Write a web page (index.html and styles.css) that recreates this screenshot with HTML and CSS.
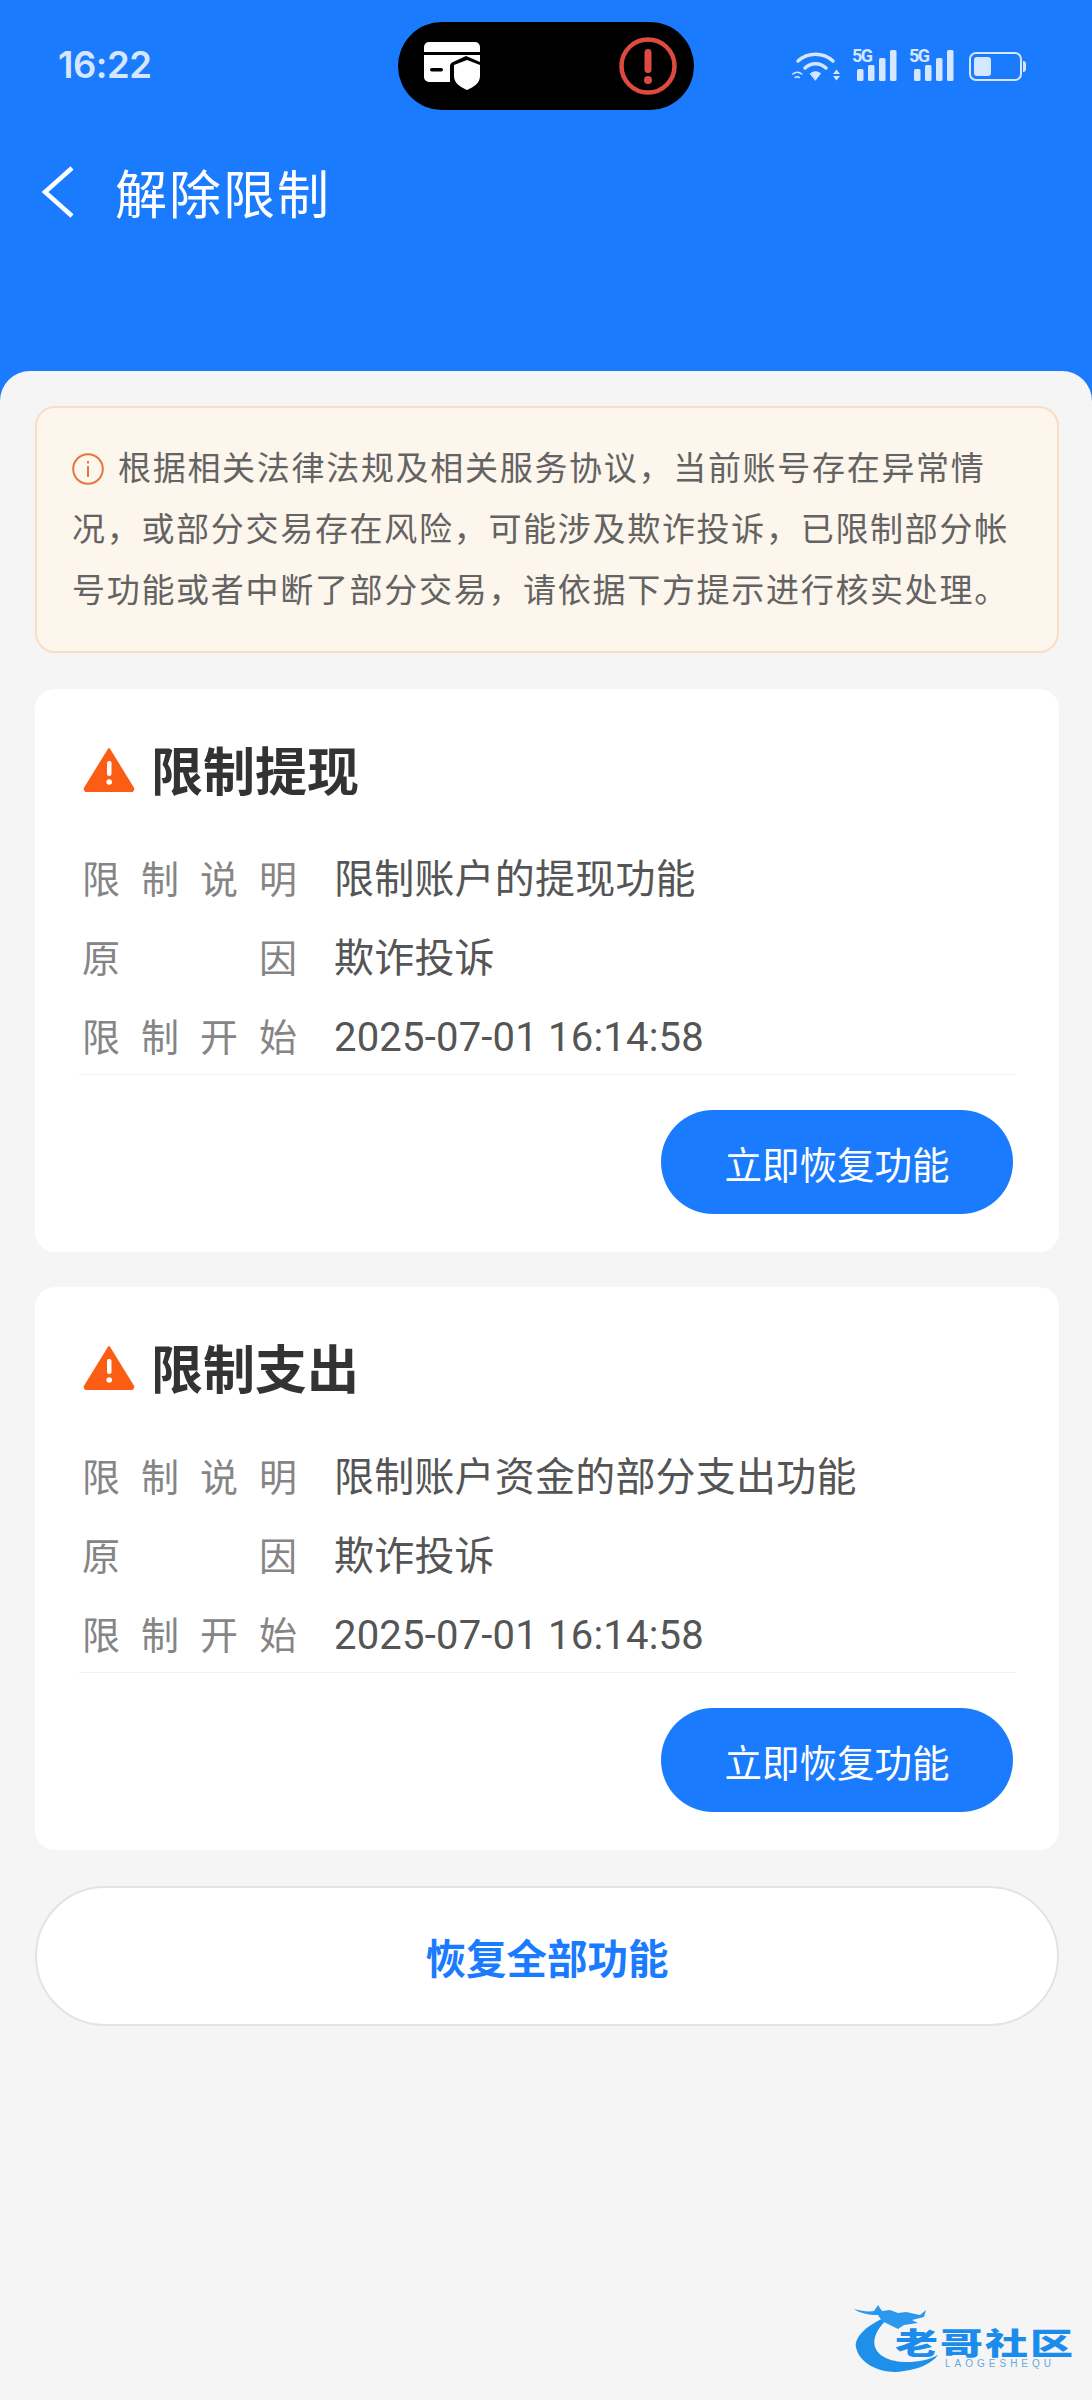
FILE: index.html
```html
<!DOCTYPE html>
<html lang="zh">
<head>
<meta charset="utf-8">
<title>解除限制</title>
<link rel="stylesheet" href="styles.css">
</head>
<body>
<header class="top">
  <div class="status">
    <span class="time">16:22</span>
    <div class="island">
      <svg class="card-icon" width="56" height="48" viewBox="0 0 56 48">
        <path fill="#fff" d="M5 0h46a5 5 0 0 1 5 5v5H0V5a5 5 0 0 1 5-5z"/>
        <path fill="#fff" d="M0 13h56v7L42 14 29 20c-2 1-3 2-3 4v16H5a5 5 0 0 1-5-5z"/>
        <rect x="6" y="26" width="13" height="3.500" rx="1.700" fill="#000"/>
        <path fill="#fff" d="M43 18l13 5v11c0 7-6 11-13 14-7-3-13-7-13-14V23z"/>
      </svg>
      <svg class="alert-icon" width="58" height="62" viewBox="0 0 58 62">
        <circle cx="29" cy="31" r="26.500" fill="none" stroke="#de4a40" stroke-width="4.500"/>
        <rect x="25.500" y="14" width="7" height="24" rx="3.500" fill="#de4a40"/>
        <circle cx="29" cy="45" r="4" fill="#de4a40"/>
      </svg>
    </div>
    <div class="sys">
      <svg class="wifi" width="48" height="31" viewBox="0 0 48 31" fill="none" stroke="#d5e6ff" stroke-linecap="round">
        <path d="M6 11a26 26 0 0 1 35 0" stroke-width="3.500"/>
        <path d="M13 18a15 15 0 0 1 21 0" stroke-width="3.500"/>
        <path d="M18.500 23.500a8 8 0 0 1 10 0L23.500 30z" fill="#d5e6ff" stroke-width="1"/>
        <path d="M0.800 24a7 7 0 0 1 9 0M3.200 27.500a3.500 3.500 0 0 1 4 0" stroke-width="1.600"/>
        <path d="M41 24l3.500-4.500 3.500 4.500zM41 26l3.500 4.500 3.500-4.500z" fill="#d5e6ff" stroke="none"/>
      </svg>
      <div class="sig"><span class="sig-5g">5G</span><svg width="40" height="31" viewBox="0 0 40 31" fill="#d5e6ff"><rect x="0" y="19" width="6.500" height="12" rx="1.500"/><rect x="11" y="15" width="6.500" height="16" rx="1.500"/><rect x="22" y="8" width="6.500" height="23" rx="1.500"/><rect x="33" y="0" width="6.500" height="31" rx="1.500"/></svg></div>
      <div class="sig"><span class="sig-5g">5G</span><svg width="40" height="31" viewBox="0 0 40 31" fill="#d5e6ff"><rect x="0" y="19" width="6.500" height="12" rx="1.500"/><rect x="11" y="15" width="6.500" height="16" rx="1.500"/><rect x="22" y="8" width="6.500" height="23" rx="1.500"/><rect x="33" y="0" width="6.500" height="31" rx="1.500"/></svg></div>
      <svg class="battery" width="57" height="29" viewBox="0 0 57 29"><rect x="1" y="1" width="51" height="27" rx="6" fill="none" stroke="#d5e6ff" stroke-width="2"/><rect x="5" y="5" width="17" height="19" rx="3" fill="#d5e6ff"/><path d="M54 9c2 0 3 1 3 3v5c0 2-1 3-3 3z" fill="#d5e6ff"/></svg>
    </div>
  </div>
  <div class="nav">
    <svg class="back" width="34" height="52" viewBox="0 0 34 52" fill="none"><path d="M31 2 4 26l27 24" stroke="#fff" stroke-width="4.500"/></svg>
    <h1 class="title">解除限制</h1>
  </div>
</header>
<main class="sheet">
  <section class="notice">
    <p class="notice-text"><svg class="info" width="32" height="32" viewBox="0 0 32 32" fill="none"><circle cx="16" cy="16" r="14.800" stroke="#e5763d" stroke-width="2"/><rect x="15" y="13" width="2" height="11" fill="#e5763d"/><rect x="15" y="8" width="2" height="2.500" fill="#e5763d"/></svg>根据相关法律法规及相关服务协议，当前账号存在异常情况，或部分交易存在风险，可能涉及欺诈投诉，已限制部分帐号功能或者中断了部分交易，请依据下方提示进行核实处理。</p>
  </section>
  <section class="card">
    <div class="card-head">
      <svg class="warn" width="52" height="46" viewBox="0 0 52 46"><path d="M26 3 50 42a2 2 0 0 1-2 3H4a2 2 0 0 1-2-3z" fill="#fb5d15" stroke="#fb5d15" stroke-width="2" stroke-linejoin="round"/><rect x="24" y="15" width="4.500" height="15" rx="2" fill="#fff"/><circle cx="26.200" cy="36" r="2.800" fill="#fff"/></svg>
      <h2 class="card-title">限制提现</h2>
    </div>
    <dl class="rows">
      <div class="row"><dt class="label">限制说明</dt><dd class="value">限制账户的提现功能</dd></div>
      <div class="row"><dt class="label">原因</dt><dd class="value">欺诈投诉</dd></div>
      <div class="row"><dt class="label">限制开始</dt><dd class="value">2025-07-01 16:14:58</dd></div>
    </dl>
    <div class="actions"><button class="btn">立即恢复功能</button></div>
  </section>
  <section class="card">
    <div class="card-head">
      <svg class="warn" width="52" height="46" viewBox="0 0 52 46"><path d="M26 3 50 42a2 2 0 0 1-2 3H4a2 2 0 0 1-2-3z" fill="#fb5d15" stroke="#fb5d15" stroke-width="2" stroke-linejoin="round"/><rect x="24" y="15" width="4.500" height="15" rx="2" fill="#fff"/><circle cx="26.200" cy="36" r="2.800" fill="#fff"/></svg>
      <h2 class="card-title">限制支出</h2>
    </div>
    <dl class="rows">
      <div class="row"><dt class="label">限制说明</dt><dd class="value">限制账户资金的部分支出功能</dd></div>
      <div class="row"><dt class="label">原因</dt><dd class="value">欺诈投诉</dd></div>
      <div class="row"><dt class="label">限制开始</dt><dd class="value">2025-07-01 16:14:58</dd></div>
    </dl>
    <div class="actions"><button class="btn">立即恢复功能</button></div>
  </section>
  <button class="restore-all">恢复全部功能</button>
  <div class="watermark">
    <svg class="wm-dragon" width="90" height="72" viewBox="0 0 90 72">
      <path d="M38 12C14 20 0 34 2 44c3 18 28 28 48 24 16-2 28-8 34-16-14 8-40 10-54 2C16 46 16 30 38 12z" fill="#1e90ea"/>
      <path d="M0 6c8 2 14 3 20 2l4-6 4 6 8-1 8 3 8-1 14 3 6-5-2 7-12 3 6 3-14 2-6 4-8-4-8-4-4-6C14 12 6 10 0 6z" fill="#2b98ee"/>
    </svg>
    <div class="wm-text">
      <span class="wm-cn">老哥社区</span>
      <span class="wm-en">LAOGESHEQU</span>
    </div>
  </div>
</main>
</body>
</html>
```

FILE: styles.css
```css
* { box-sizing: border-box; }
html, body { margin: 0; padding: 0; height: 2400px; overflow: hidden; }
body {
  background: #1b7bfe;
  font-family: "Noto Sans CJK SC", "Roboto", sans-serif;
  display: flex;
  flex-direction: column;
}
.top { height: 371px; flex: none; color: #fff; }
.status {
  height: 160px;
  padding: 22px 0 0 58px;
  display: flex;
  align-items: flex-start;
}
.time {
  width: 340px;
  font-family: "Inter", sans-serif;
  font-weight: 600;
  font-size: 36.500px;
  line-height: 86px;
  color: #d5e6ff;
  letter-spacing: -0.5px;
}
.island {
  width: 296px;
  height: 88px;
  background: #000;
  border-radius: 44px;
  padding: 0 17px 0 26px;
  display: flex;
  align-items: center;
  justify-content: space-between;
}
.sys {
  margin-left: 98px;
  padding-top: 28px;
  display: flex;
  align-items: flex-end;
  gap: 17px;
}
.sig { position: relative; width: 40px; height: 31px; }
.sig > svg { display: block; }
.battery { margin-left: -2px; }
.sig-5g {
  position: absolute;
  left: -5px;
  top: -2px;
  font-family: "Roboto", sans-serif;
  font-weight: 700;
  font-size: 18px;
  line-height: 16px;
  color: #d5e6ff;
  letter-spacing: -1.500px;
}
.nav {
  display: flex;
  align-items: center;
  padding-left: 41px;
  gap: 40px;
  height: 64px;
}
.title { margin: 0; font-size: 52px; font-weight: 400; line-height: 64px; letter-spacing: 2px; }
.sheet {
  flex: 1;
  background: #f5f5f5;
  border-radius: 30px 30px 0 0;
  padding: 35px 33px 0 35px;
  position: relative;
}
.notice {
  height: 247px;
  background: #fdf6ec;
  border: 2.500px solid #fbdcc5;
  border-radius: 20px;
  padding: 28px 30px 0 35px;
  margin-bottom: 36px;
}
.notice-text {
  margin: 0;
  font-size: 33px;
  line-height: 61px;
  letter-spacing: 1.7px;
  color: #636363;
}
.info { vertical-align: -5px; margin-right: 14px; }
.card {
  height: 563px;
  background: #fff;
  border-radius: 20px;
  padding: 47px 46px 0 48px;
  margin-bottom: 35px;
}
.card-head { display: flex; align-items: center; gap: 16px; height: 66px; margin-bottom: 34px; }
.card-title { margin: 0; font-size: 52px; font-weight: 700; line-height: 66px; color: #333; }
.rows {
  margin: 0 -3px 35px -4px;
  border-bottom: 1px solid #f2f2f2;
  height: 239px;
}
.row { display: flex; height: 79px; padding-top: 9px; align-items: center; font-family: "Roboto", "Noto Sans CJK SC", sans-serif; }
.label {
  width: 218px;
  padding-left: 3px;
  margin-right: 37px;
  font-size: 38px;
  line-height: 50px;
  color: #858585;
  text-align: justify;
  text-align-last: justify;
}
.value { margin: 0; font-size: 40px; line-height: 50px; letter-spacing: 0.2px; color: #555; }
.actions { display: flex; justify-content: flex-end; }
.btn {
  width: 352px;
  height: 104px;
  border: 0;
  border-radius: 52px;
  background: #1b7bfe;
  color: #fff;
  font-family: inherit;
  font-size: 37.500px;
}
.restore-all {
  display: block;
  width: 1024px;
  height: 140px;
  margin-top: 36px;
  background: #fff;
  border: 2px solid #e3e3e3;
  border-radius: 70px;
  color: #1b7bfe;
  font-family: inherit;
  font-weight: 700;
  font-size: 40.500px;
}
.watermark {
  position: absolute;
  left: 854px;
  top: 1932px;
  width: 222px;
  height: 72px;
}
.wm-dragon { position: absolute; left: 0; top: 0; }
.wm-text { position: absolute; left: 41px; top: 23px; display: flex; flex-direction: column; }
.wm-cn {
  display: block;
  font-size: 43px;
  font-weight: 900;
  line-height: 43px;
  height: 30px;
  letter-spacing: 2px;
  color: #1b8cec;
  white-space: nowrap;
  transform: scaleY(0.7);
  transform-origin: left top;
}
.wm-en {
  font-family: "Liberation Sans", sans-serif;
  font-size: 10px;
  line-height: 11px;
  letter-spacing: 4px;
  padding-left: 50px;
  margin-top: 2px;
  color: #6aa9de;
}
```
